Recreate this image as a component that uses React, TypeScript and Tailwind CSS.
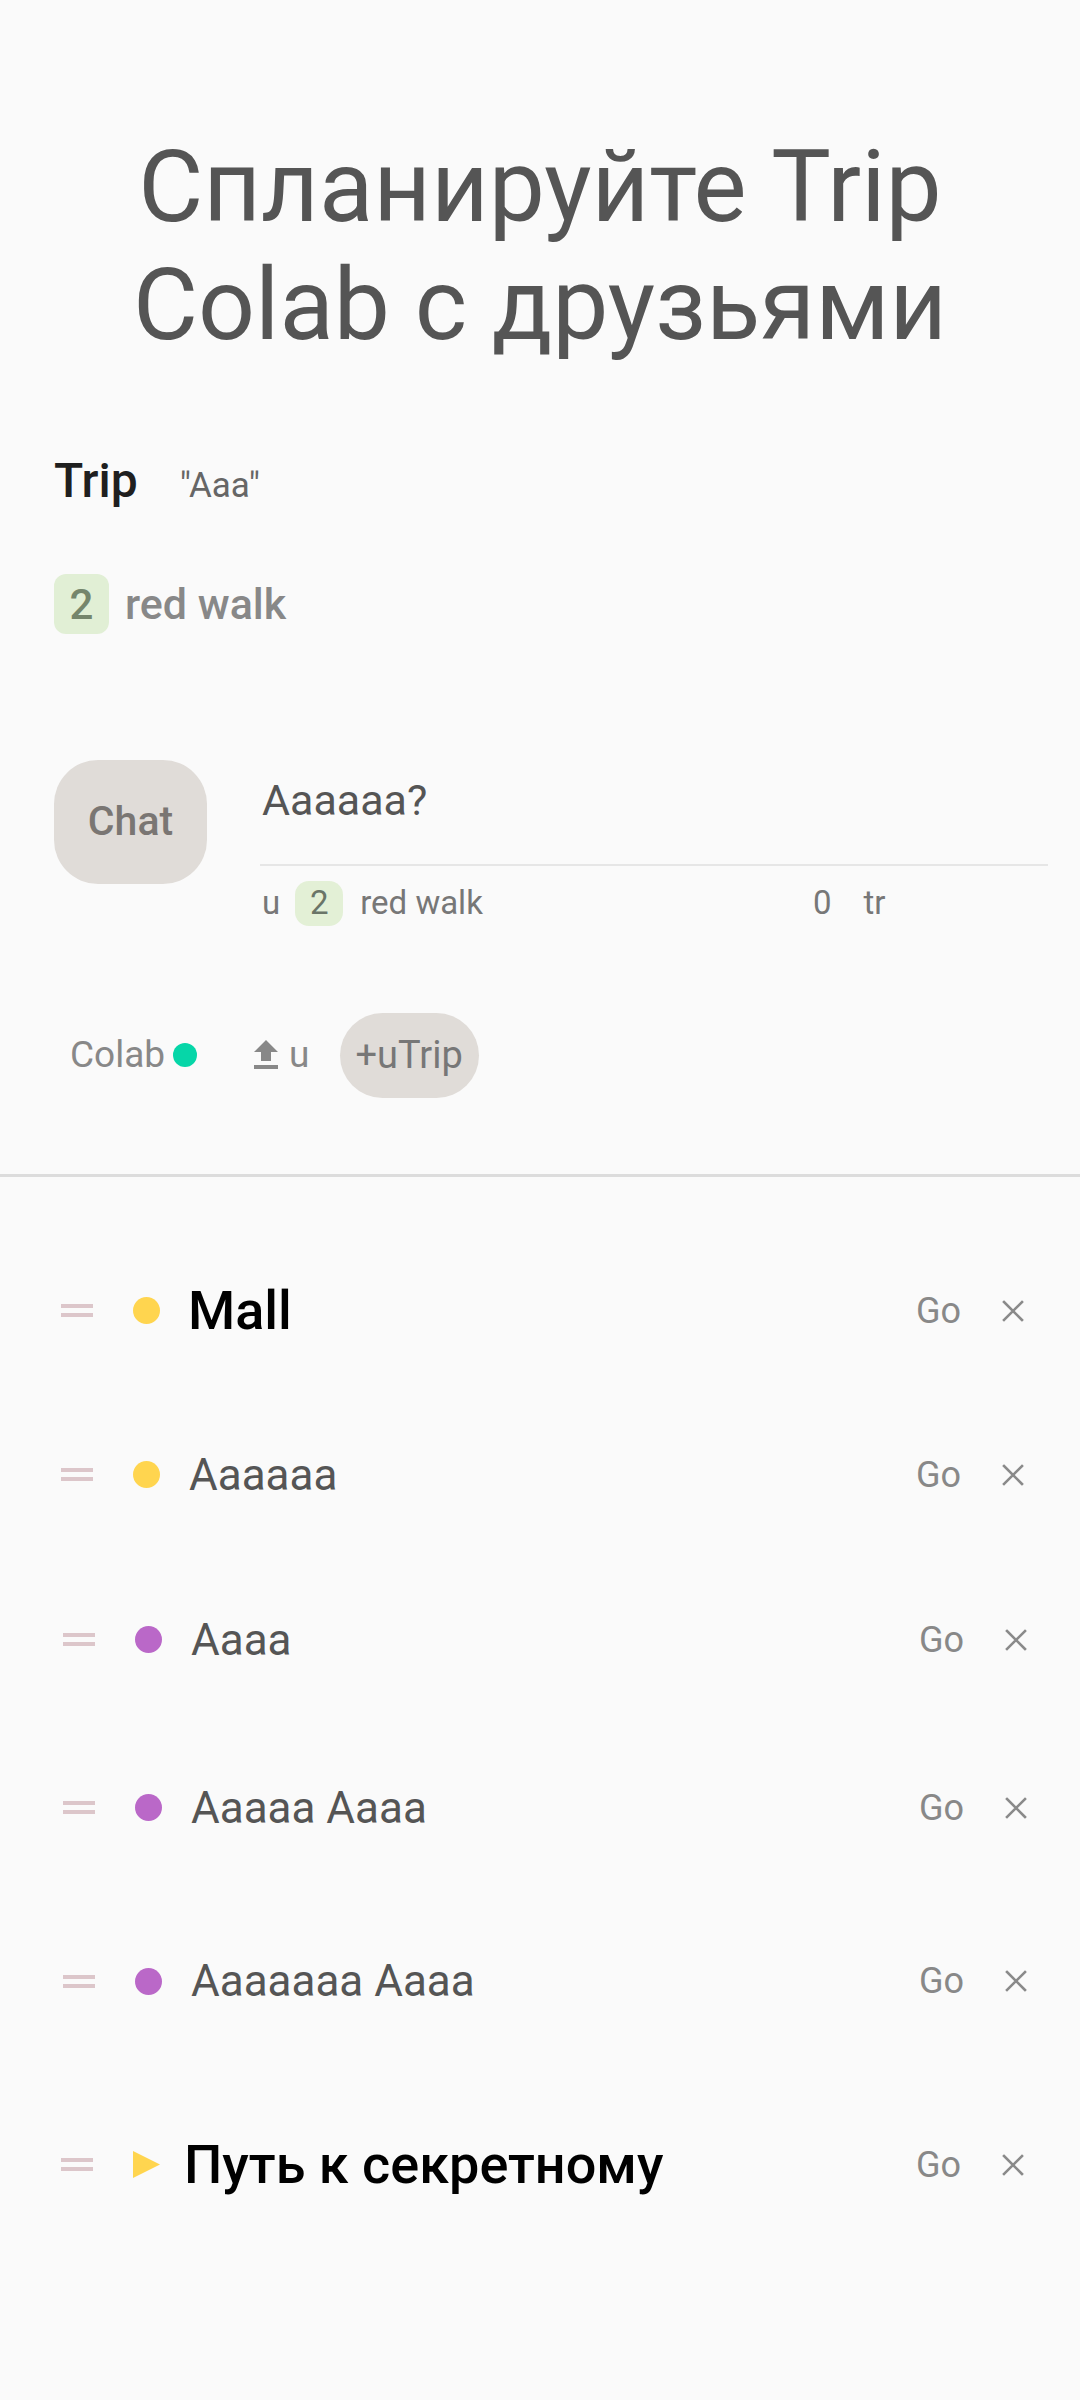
import React from 'react';

type Marker = 'yellow' | 'purple' | 'play';

const rows: { id: number; title: string; marker: Marker; strong?: boolean; h: string; shift?: boolean }[] = [
  { id: 1, title: 'Mall', marker: 'yellow', strong: true, h: 'h-[164px]' },
  { id: 2, title: 'Aaaaaa', marker: 'yellow', h: 'h-[164px]' },
  { id: 3, title: 'Aaaa', marker: 'purple', h: 'h-[166px]', shift: true },
  { id: 4, title: 'Aaaaa Aaaa', marker: 'purple', h: 'h-[170px]', shift: true },
  { id: 5, title: 'Aaaaaaa Aaaa', marker: 'purple', h: 'h-[177px]', shift: true },
  { id: 6, title: 'Путь к секретному', marker: 'play', strong: true, h: 'h-[190px]' },
];

const Handle: React.FC = () => (
  <div className="flex flex-col gap-[5px] w-[32px] shrink-0">
    <div className="h-[4px] bg-[#dcc6ca]" />
    <div className="h-[4px] bg-[#dcc6ca]" />
  </div>
);

const MarkerIcon: React.FC<{ type: Marker }> = ({ type }) => {
  if (type === 'play') {
    return (
      <svg width="27" height="27" viewBox="0 0 26 26" className="ml-[40px] shrink-0">
        <path d="M0 0 L26 13 L0 26 Z" fill="#ffd54f" />
      </svg>
    );
  }
  return (
    <div
      className={
        type === 'yellow'
          ? 'ml-[40px] w-[27px] h-[27px] rounded-full bg-[#ffd54f] shrink-0'
          : 'ml-[40px] w-[27px] h-[27px] rounded-full bg-[#ba68c8] shrink-0'
      }
    />
  );
};

const CloseIcon: React.FC = () => (
  <svg width="22" height="22" viewBox="0 0 22 22" className="ml-[41px] shrink-0">
    <path d="M2 2 L20 20 M20 2 L2 20" stroke="#8a8a8a" strokeWidth="2.6" strokeLinecap="square" />
  </svg>
);

const UploadIcon: React.FC = () => (
  <svg width="26" height="30" viewBox="0 0 26 30" className="shrink-0">
    <path d="M13 0 L25 12 L18 12 L18 21 L8 21 L8 12 L1 12 Z" fill="#888888" />
    <rect x="1" y="25" width="24" height="4" fill="#888888" />
  </svg>
);

export default function App() {
  return (
    <div className="min-h-[2400px] bg-[#fafafa] font-['Roboto',sans-serif]">
      {/* header */}
      <div className="pt-[128px] text-center text-[100px] leading-[118px] text-[#555555]">
        <div>Спланируйте Trip</div>
        <div>Colab с друзьями</div>
      </div>

      <div className="mt-[87px] pl-[54px] flex items-baseline h-[60px] leading-[60px]">
        <span className="text-[48px] font-medium text-[#1f1f1f]">Trip</span>
        <span className="ml-[42px] text-[35px] text-[#666666]">"Aaa"</span>
      </div>

      <div className="mt-[61px] pl-[54px] flex items-center">
        <div className="w-[55px] h-[60px] rounded-[12px] bg-[#e1efd5] flex items-center justify-center text-[42px] font-medium text-[#75866c]">
          2
        </div>
        <span className="ml-[16px] text-[43px] font-medium text-[#888888]">red walk</span>
      </div>

      {/* chat block */}
      <div className="mt-[123px] pl-[54px] flex items-start">
        <div className="w-[153px] h-[124px] rounded-[44px] bg-[#e0dcd8] flex items-center justify-center text-[41px] font-medium text-[#7a7673] shrink-0">
          Chat
        </div>
        <div className="ml-[53px] w-[788px] pt-[12px]">
          <div className="pl-[2px] text-[43px] leading-[56px] text-[#555555]">Aaaaaa?</div>
          <div className="mt-[36px] h-[2px] bg-[#e6e6e6]" />
          <div className="mt-[15px] h-[45px] pl-[2px] flex items-center text-[33px] text-[#777777]">
            <div className="w-[551px] flex items-center">
              <span>u</span>
              <span className="ml-[15px] w-[48px] h-[45px] rounded-[14px] bg-[#e3f0d6] flex items-center justify-center text-[#6a7568]">
                2
              </span>
              <span className="ml-[17px]">red walk</span>
            </div>
            <span>0</span>
            <span className="ml-[32px]">tr</span>
          </div>
        </div>
      </div>

      {/* controls */}
      <div className="mt-[87px] pl-[70px] h-[85px] flex items-center text-[37px] text-[#888888]">
        <span>Colab</span>
        <span className="ml-[8px] w-[24px] h-[24px] rounded-full bg-[#06d6a8]" />
        <span className="ml-[56px] flex items-center">
          <UploadIcon />
          <span className="ml-[10px]">u</span>
        </span>
        <span className="ml-[30px] h-[85px] px-[16px] rounded-full bg-[#e0dcd8] flex items-center text-[38px] text-[#777777]">
          +uTrip
        </span>
      </div>

      <div className="mt-[76px] h-[3px] bg-[#dcdcdc]" />

      {/* list */}
      <div className="mt-[52px]">
        {rows.map((r) => (
          <div
            key={r.id}
            className={`${r.h} flex items-center ${r.shift ? 'pl-[63px] pr-[53px]' : 'pl-[61px] pr-[56px]'}`}
          >
            <Handle />
            <MarkerIcon type={r.marker} />
            <span
              className={
                r.marker === 'play'
                  ? 'ml-[24px] flex-1 text-[54px] font-medium text-black'
                  : r.strong
                  ? 'ml-[28px] flex-1 text-[54px] font-medium text-black'
                  : 'ml-[29px] flex-1 text-[44px] text-[#555555]'
              }
            >
              {r.title}
            </span>
            <span className="text-[36px] text-[#888888]">Go</span>
            <CloseIcon />
          </div>
        ))}
      </div>
    </div>
  );
}
